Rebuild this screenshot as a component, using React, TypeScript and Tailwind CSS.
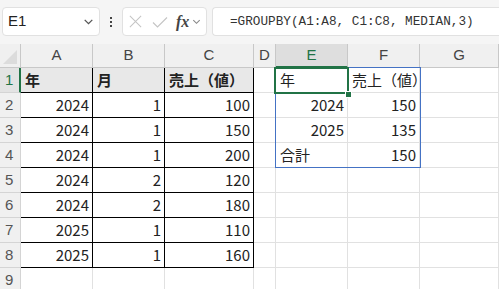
import React from "react";

const cols = ["A", "B", "C", "D", "E", "F", "G"];

type Cell = { v: string; align?: "l" | "r"; bold?: boolean };

const table: [number, number, number][] = [
  [2024, 1, 100],
  [2024, 1, 150],
  [2024, 1, 200],
  [2024, 2, 120],
  [2024, 2, 180],
  [2025, 1, 110],
  [2025, 1, 160],
];

const spill: [string, string][] = [
  ["年", "売上（値）"],
  ["2024", "150"],
  ["2025", "135"],
  ["合計", "150"],
];

function rowCells(r: number): Cell[] {
  const out: Cell[] = [];
  if (r === 1) {
    out.push({ v: "年", bold: true }, { v: "月", bold: true }, { v: "売上（値）", bold: true });
  } else if (r <= 8) {
    const d = table[r - 2];
    out.push({ v: String(d[0]), align: "r" }, { v: String(d[1]), align: "r" }, { v: String(d[2]), align: "r" });
  } else {
    out.push({ v: "" }, { v: "" }, { v: "" });
  }
  out.push({ v: "" });
  if (r <= 4) {
    const s = spill[r - 1];
    const left = r === 1 || r === 4;
    out.push({ v: s[0], align: left ? "l" : "r" }, { v: s[1], align: r === 1 ? "l" : "r" });
  } else {
    out.push({ v: "" }, { v: "" });
  }
  out.push({ v: "" });
  return out;
}

function Chevron({ className }: { className?: string }) {
  return (
    <svg viewBox="0 0 12 12" className={className} fill="none" stroke="currentColor" strokeWidth="1.2">
      <path d="M2.5 4.5 L6 8 L9.5 4.5" />
    </svg>
  );
}

export default function App() {
  const rows = [1, 2, 3, 4, 5, 6, 7, 8, 9];
  return (
    <div className="w-[499px] h-[289px] overflow-hidden bg-white font-['Noto_Sans_CJK_JP','Noto_Sans',sans-serif] text-[#222]">
      {/* formula bar */}
      <div className="h-[44px] bg-[#f5f5f5] flex items-start pt-[7px] pl-[2px] gap-0">
        <div className="w-[98px] h-[29px] rounded-[4px] border border-[#e1e1e1] bg-white flex items-center pl-[5px] pr-[4px]">
          <span className="text-[15px] text-[#222] flex-1 font-['Liberation_Sans',sans-serif]">E1</span>
          <Chevron className="w-[13px] h-[13px] text-[#555]" />
        </div>
        <div className="w-[22px] h-[29px] flex flex-col items-center justify-center gap-[2px]">
          <span className="w-[2px] h-[2px] bg-[#444]" />
          <span className="w-[2px] h-[2px] bg-[#444]" />
          <span className="w-[2px] h-[2px] bg-[#444]" />
        </div>
        <div className="w-[85px] h-[29px] rounded-[4px] border border-[#e1e1e1] bg-white flex items-center pl-[5px]">
          <svg viewBox="0 0 16 16" className="w-[15px] h-[15px] text-[#c4c4c4]" fill="none" stroke="currentColor" strokeWidth="1.1">
            <path d="M2 2 L14 14 M14 2 L2 14" />
          </svg>
          <svg viewBox="0 0 16 16" className="w-[16px] h-[16px] ml-[9px] text-[#c4c4c4]" fill="none" stroke="currentColor" strokeWidth="1.1">
            <path d="M1 8.5 L5.5 13 L15 3.5" />
          </svg>
          <span className="ml-[8px] text-[16px] italic font-bold font-['Liberation_Serif',serif] text-[#444] leading-none">fx</span>
          <Chevron className="w-[11px] h-[11px] ml-[2px] text-[#888]" />
        </div>
        <div className="ml-[5px] flex-1 h-[29px] rounded-l-[4px] border border-r-0 border-[#e1e1e1] bg-white flex items-center pl-[17px]">
          <span className="text-[12.7px] font-['Liberation_Mono',monospace] text-[#333] whitespace-pre">=GROUPBY(A1:A8, C1:C8, MEDIAN,3)</span>
        </div>
      </div>

      {/* sheet */}
      <div className="relative">
        <div className="grid grid-cols-[21px_72px_72px_89px_22px_72px_72px_1fr] grid-rows-[24px_repeat(9,25px)]">
          <div className="bg-[#f0f0f0] border-r border-b border-[#c8c8c8] flex items-end justify-end pr-[3px] pb-[3px]">
            <svg viewBox="0 0 14 14" className="w-[14px] h-[14px]">
              <polygon points="14,0 14,14 0,14" fill="#dcdcdc" />
            </svg>
          </div>
          {cols.map((c) => (
            <div
              key={c}
              className={
                c === "E"
                  ? "bg-[#dedede] border-r border-[#c8c8c8] border-b-2 border-b-[#217346] flex items-center justify-center text-[15px] text-[#217346]"
                  : "bg-[#f0f0f0] border-r border-b border-[#c8c8c8] flex items-center justify-center text-[15px] text-[#444]"
              }
            >
              <span className="font-['Liberation_Sans',sans-serif]">{c}</span>
            </div>
          ))}
          {rows.map((r) => (
            <React.Fragment key={r}>
              <div
                className={
                  r === 1
                    ? "bg-[#e3e3e3] border-r-2 border-r-[#217346] border-b border-b-[#d4d4d4] flex items-center pl-[5px] text-[15px] text-[#217346]"
                    : "bg-[#f0f0f0] border-r border-b border-[#d4d4d4] flex items-center pl-[5px] text-[15px] text-[#555]"
                }
              >
                <span className="font-['Liberation_Sans',sans-serif]">{r}</span>
              </div>
              {rowCells(r).map((cell, i) => {
                const inTable = i < 3 && r <= 8;
                const base = inTable
                  ? "border-r border-b border-black"
                  : "border-r border-b border-[#e1e1e1]";
                const fill = inTable && r === 1 ? "bg-[#e8e8e8]" : "bg-white";
                return (
                  <div
                    key={i}
                    className={`${base} ${fill} flex items-center overflow-visible whitespace-nowrap text-[15px] ${
                      cell.align === "r" ? "justify-end pr-[3px]" : "justify-start pl-[4px]"
                    } ${cell.bold ? "font-bold" : ""}`}
                  >
                    {cell.v}
                  </div>
                );
              })}
            </React.Fragment>
          ))}
        </div>

        {/* spill range */}
        <div className="absolute left-[275px] top-[23px] w-[146px] h-[101px] border border-[#4472c4] pointer-events-none" />
        {/* active cell */}
        <div className="absolute left-[274px] top-[23px] w-[75px] h-[27px] border-2 border-[#217346] pointer-events-none" />
        <div className="absolute left-[345px] top-[47px] w-[7px] h-[7px] bg-[#217346] border border-white pointer-events-none" />
      </div>
    </div>
  );
}
